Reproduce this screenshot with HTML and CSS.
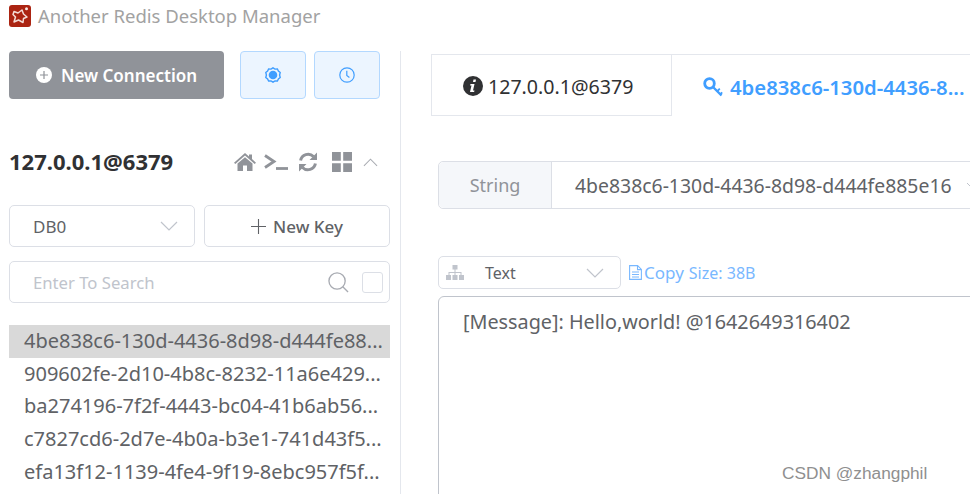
FILE: index.html
```html
<!DOCTYPE html>
<html lang="en">
<head>
<meta charset="utf-8">
<title>Another Redis Desktop Manager</title>
<link rel="stylesheet" href="styles.css">
</head>
<body>
<div class="app">
  <header class="titlebar">
    <svg class="logo" viewBox="0 0 22 22"><rect width="22" height="22" rx="3" fill="#ab2412"/><path d="M5 6.500 L9 8 L13 5 L14.500 9 L18 12 L14.500 13.500 L14 17.500 L9.500 15 L5 17 L6.500 12 L4 9.500 Z" fill="none" stroke="#f4dcd6" stroke-width="1.500" stroke-linejoin="round"/><circle cx="17.500" cy="3.800" r="1.500" fill="#f8e8e4"/></svg>
    <span class="app-title">Another Redis Desktop Manager</span>
  </header>
  <div class="workspace">
    <aside class="sidebar">
      <div class="top-actions">
        <button class="btn-new"><svg class="plus-circle" viewBox="0 0 16 16"><circle cx="8" cy="8" r="8" fill="#fff"/><path d="M8 4v8M4 8h8" stroke="#909399" stroke-width="1.200"/></svg>New Connection</button>
        <button class="btn-soft"><svg class="soft-icon" viewBox="0 0 16 16"><path d="M8 .8l2 1.300 2.400-.1 1 2 1.800 1.500-.6 2.500.6 2.500-1.800 1.500-1 2-2.400-.1L8 15.200l-2-1.300-2.400.1-1-2L.8 10.500l.6-2.500-.6-2.500 1.800-1.500 1-2 2.400.1z" fill="none" stroke="#409eff" stroke-width="1.400"/><circle cx="8" cy="8" r="4.300" fill="#409eff"/></svg></button>
        <button class="btn-soft"><svg class="soft-icon" viewBox="0 0 16 16"><circle cx="8" cy="8" r="7.200" fill="none" stroke="#409eff" stroke-width="1.200"/><path d="M7.800 3.800v4.600l2.600 2" fill="none" stroke="#409eff" stroke-width="1.200"/></svg></button>
      </div>
      <div class="server-row">
        <span class="server-name">127.0.0.1@6379</span>
        <div class="server-icons">
          <svg class="ic-home" viewBox="0 0 22 18"><path d="M11 0 L15 3.500V1.500h3v4.600l4 3.600-1.300 1.200L11 2.600 1.300 10.900 0 9.700z M3.500 10.500 L11 4.200l7.500 6.300V18h-5.500v-5.500H9V18H3.500z" fill="#909399"/></svg>
          <svg class="ic-term" viewBox="0 0 24 18"><path d="M1 2.500L10 8.500 1 14.500" fill="none" stroke="#909399" stroke-width="2.800"/><path d="M12 15.500h12" stroke="#909399" stroke-width="2.800"/></svg>
          <svg class="ic-refresh" viewBox="0 0 20 20"><path d="M2.600 8.500A7.600 7.600 0 0 1 15.500 4.500M17.400 11.500A7.600 7.600 0 0 1 4.500 15.500" fill="none" stroke="#909399" stroke-width="3"/><path d="M19 .5v7.500h-7.500zM1 19.500V12h7.500z" fill="#909399"/></svg>
          <svg class="ic-grid" viewBox="0 0 20 20"><path d="M0 0h8.800v8.800H0zM11.200 0H20v8.800h-8.800zM0 11.200h8.800V20H0zM11.200 11.200H20V20h-8.800z" fill="#909399"/></svg>
          <svg class="ic-up" viewBox="0 0 16 9"><path d="M1 8l7-7 7 7" fill="none" stroke="#a9acb2" stroke-width="1.100"/></svg>
        </div>
      </div>
      <div class="db-row">
        <div class="field db-select"><span>DB0</span><svg class="chev" viewBox="0 0 18 10"><path d="M1 1l8 8 8-8" fill="none" stroke="#c0c4cc" stroke-width="1.200"/></svg></div>
        <button class="btn-key"><svg class="key-plus" viewBox="0 0 15 15"><path d="M7.500 0v15M0 7.500h15" stroke="#606266" stroke-width="1.100"/></svg>New Key</button>
      </div>
      <div class="field search-box">
        <span class="placeholder">Enter To Search</span>
        <svg class="ic-search" viewBox="0 0 22 22"><circle cx="9.500" cy="9.500" r="8.500" fill="none" stroke="#a8abb2" stroke-width="1.400"/><path d="M15.500 15.500l5.500 5.500" stroke="#a8abb2" stroke-width="1.400"/></svg>
        <span class="checkbox"></span>
      </div>
      <ul class="key-list">
        <li class="key-row is-active">4be838c6-130d-4436-8d98-d444fe88...</li>
        <li class="key-row">909602fe-2d10-4b8c-8232-11a6e429...</li>
        <li class="key-row">ba274196-7f2f-4443-bc04-41b6ab56...</li>
        <li class="key-row">c7827cd6-2d7e-4b0a-b3e1-741d43f5...</li>
        <li class="key-row">efa13f12-1139-4fe4-9f19-8ebc957f5f...</li>
      </ul>
    </aside>
    <main class="content">
      <div class="tabs">
        <div class="tab tab-info"><svg class="ic-info" viewBox="0 0 20 20"><circle cx="10" cy="10" r="10" fill="#303133"/><path d="M10.500 3.500h2.500l-.5 2.500h-2.500zM7.500 8h4l-1.500 6.500h1.500l-.4 1.600H7l1.500-6.500H7.100z" fill="#fff"/></svg>127.0.0.1@6379</div>
        <div class="tab tab-key"><svg class="ic-key" viewBox="0 0 20 20"><circle cx="6.500" cy="6.500" r="4.800" fill="none" stroke="#409eff" stroke-width="2.800"/><path d="M10 10l8.500 8.500" stroke="#409eff" stroke-width="2.400"/><path d="M14 14.500l2.800-2.800M17 17.500l2.200-2.200" stroke="#409eff" stroke-width="1.800"/></svg><span class="tab-key-text">4be838c6-130d-4436-8...</span></div>
      </div>
      <div class="key-header">
        <div class="type-label">String</div>
        <div class="key-name"><span>4be838c6-130d-4436-8d98-d444fe885e16</span><svg class="chev-small" viewBox="0 0 10 6"><path d="M1 1l4 4 4-4" fill="none" stroke="#c0c4cc" stroke-width="1"/></svg></div>
      </div>
      <div class="format-row">
        <div class="field format-select">
          <svg class="ic-sitemap" viewBox="0 0 18 15"><path d="M6.500 0h5v4.500h-5zM8.500 4.500h1v2.500h6v3h-1V8h-5v2h-1V8h-5v2h-1V7h6z M0 10h5v5H0zM6.500 10h5v5h-5zM13 10h5v5h-5z" fill="#c0c4cc"/></svg>
          <span class="format-text">Text</span>
          <svg class="chev" viewBox="0 0 18 10"><path d="M1 1l8 8 8-8" fill="none" stroke="#c0c4cc" stroke-width="1.200"/></svg>
        </div>
        <svg class="ic-file" viewBox="0 0 13 15"><path d="M.6.600h8l3.800 3.800v10H.6zM8.500.600v4h4M3 7h7M3 9.500h7M3 12h7" fill="none" stroke="#79b8ff" stroke-width="1.100"/></svg>
        <span class="copy-link">Copy</span>
        <span class="size-link">Size: 38B</span>
      </div>
      <div class="value-box">[Message]: Hello,world! @1642649316402</div>
    </main>
  </div>
  <div class="watermark">CSDN @zhangphil</div>
</div>
</body>
</html>
```

FILE: styles.css
```css
* { box-sizing: border-box; }
html, body { margin: 0; padding: 0; background: #fff; }
body { font-family: "Noto Sans", "Open Sans", sans-serif; color: #606266; }
button { font-family: inherit; cursor: pointer; padding: 0; }
.app { position: relative; width: 970px; height: 494px; overflow: hidden; }

.titlebar { height: 51px; padding: 5px 0 0 9px; display: flex; align-items: flex-start; gap: 7px; }
.logo { width: 22px; height: 22px; }
.app-title { font-size: 18.500px; line-height: 22px; color: #a2a2a2; }

.workspace { display: flex; height: 443px; }
.sidebar { width: 401px; flex: none; border-right: 1px solid #e4e7ed; padding: 0 10px 0 9px; }

.top-actions { display: flex; align-items: center; }
.btn-new { width: 215px; height: 48px; margin-right: 16px; border: 0; border-radius: 4px; background: #909399; color: #fff; font-size: 17px; font-weight: 600; display: flex; align-items: center; justify-content: center; gap: 9px; }
.plus-circle { width: 16px; height: 16px; }
.btn-soft { width: 66px; height: 48px; margin-right: 8px; border: 1px solid #b3d8ff; border-radius: 4px; background: #ecf5ff; display: flex; align-items: center; justify-content: center; }
.soft-icon { width: 16px; height: 16px; }

.server-row { display: flex; align-items: center; justify-content: space-between; height: 42px; margin-top: 42px; padding-right: 12px; }
.server-name { font-size: 22px; font-weight: 700; line-height: 40px; height: 40px; margin-bottom: 2px; color: #303133; }
.server-icons { display: flex; align-items: center; }
.ic-home { width: 22px; height: 18px; margin-right: 8px; }
.ic-term { width: 24px; height: 18px; margin-right: 10px; }
.ic-refresh { width: 20px; height: 20px; margin-right: 14px; }
.ic-grid { width: 20px; height: 20px; margin-right: 11px; }
.ic-up { width: 15px; height: 9px; }

.db-row { display: flex; gap: 9px; margin-top: 22px; }
.field { border: 1px solid #dcdfe6; border-radius: 5px; display: flex; align-items: center; background: #fff; }
.db-select { width: 186px; height: 42px; padding: 0 16px 0 23px; justify-content: space-between; font-size: 17px; }
.chev { width: 18px; height: 10px; }
.btn-key { width: 186px; height: 42px; border: 1px solid #dcdfe6; border-radius: 5px; background: #fff; color: #606266; font-size: 17px; font-weight: 500; display: flex; align-items: center; justify-content: center; gap: 7px; }
.key-plus { width: 15px; height: 15px; }

.search-box { height: 42px; margin-top: 14px; padding: 0 6px 0 23px; }
.placeholder { flex: 1; font-size: 16.700px; color: #c0c4cc; }
.ic-search { width: 21px; height: 21px; margin-right: 13px; }
.checkbox { width: 21px; height: 21px; border: 1px solid #dcdfe6; border-radius: 3px; }

.key-list { list-style: none; margin: 22px 0 0; padding: 0; }
.key-row { height: 32.700px; line-height: 32.700px; padding-left: 15px; font-size: 20px; color: #606266; white-space: nowrap; }
.is-active { background: #d9d9d9; }

.content { flex: 1; min-width: 0; padding: 3px 0 0 30px; }
.tabs { display: flex; height: 62px; border-top: 1px solid #e4e7ed; }
.tab { height: 61px; display: flex; align-items: center; padding-top: 2px; }
.tab-info { width: 241px; padding-left: 31px; gap: 5px; font-size: 19.600px; color: #303133; border: 1px solid #e4e7ed; border-top: 0; }
.ic-info { width: 20px; height: 20px; flex: none; }
.tab-key { padding-left: 31px; gap: 7px; font-size: 20.300px; color: #409eff; font-weight: 600; white-space: nowrap; }
.ic-key { width: 20px; height: 20px; flex: none; }

.key-header { display: flex; height: 48px; margin: 45px 0 0 7px; width: 560px; border: 1px solid #dcdfe6; border-radius: 5px 0 0 5px; font-size: 18px; }
.type-label { width: 113px; flex: none; background: #f5f7fa; color: #909399; display: flex; align-items: center; justify-content: center; border-right: 1px solid #dcdfe6; border-radius: 5px 0 0 5px; }
.key-name { flex: 1; display: flex; align-items: center; gap: 14px; padding-left: 23px; font-size: 19.400px; white-space: nowrap; }
.chev-small { width: 10px; height: 6px; flex: none; }

.format-row { display: flex; align-items: center; height: 33px; margin: 47px 0 0 7px; }
.format-select { width: 183px; height: 33px; padding: 0 16px 0 7px; }
.ic-sitemap { width: 18px; height: 15px; margin-right: 21px; }
.format-text { flex: 1; font-size: 16px; }
.ic-file { width: 13px; height: 15px; margin-left: 8px; flex: none; }
.copy-link { font-size: 17px; color: #79b8ff; margin-left: 2px; }
.size-link { font-size: 16px; color: #79b8ff; margin-left: 5px; }

.value-box { width: 560px; height: 220px; margin: 7px 0 0 7px; padding: 12px 0 0 24px; border: 1px solid #c0c4cc; border-radius: 6px 0 0 0; font-size: 19.800px; line-height: 26px; }

.watermark { position: absolute; left: 782px; top: 462px; font-family: "Liberation Sans", sans-serif; font-size: 17.300px; line-height: 22px; color: #8f8f8f; }
```
